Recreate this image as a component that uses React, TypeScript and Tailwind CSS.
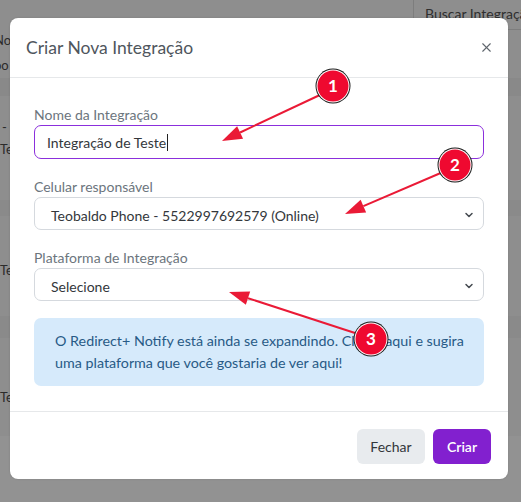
import { X, ChevronDown } from 'lucide-react'

const font = { fontFamily: 'Lato, "Noto Sans", sans-serif' }

function Marker({ x, y, n }: { x: number; y: number; n: number }) {
  return (
    <g>
      <circle cx={x} cy={y} r={17.5} fill="#1a1a1a" />
      <circle cx={x} cy={y} r={16.5} fill="#ffffff" />
      <circle cx={x} cy={y} r={15.5} fill="#ef0930" />
      <text
        x={x}
        y={y + 6}
        textAnchor="middle"
        fontSize={17}
        fontWeight={700}
        fill="#ffffff"
        fontFamily="Lato, Roboto, sans-serif"
      >
        {n}
      </text>
    </g>
  )
}

function Arrow({ x1, y1, x2, y2 }: { x1: number; y1: number; x2: number; y2: number }) {
  const a = Math.atan2(y2 - y1, x2 - x1)
  const len = 20
  const w = 7
  const bx = x2 - Math.cos(a) * len
  const by = y2 - Math.sin(a) * len
  const p1 = `${bx + Math.sin(a) * w},${by - Math.cos(a) * w}`
  const p2 = `${bx - Math.sin(a) * w},${by + Math.cos(a) * w}`
  return (
    <g>
      <line x1={x1} y1={y1} x2={bx} y2={by} stroke="#ea1a36" strokeWidth={2} />
      <polygon points={`${x2},${y2} ${p1} ${p2}`} fill="#ea1a36" />
    </g>
  )
}

function Field({ label, children }: { label: string; children: React.ReactNode }) {
  return (
    <div className="flex flex-col">
      <label className="text-[14px] leading-[18px] text-[#6c757d] mb-[1px]">{label}</label>
      {children}
    </div>
  )
}

function Select({ value }: { value: string }) {
  return (
    <div className="relative flex items-center h-[33px] rounded-[7px] border border-[#d5d9de] bg-white pl-[16px] pt-[3px] text-[14px] text-[#33373b]">
      <span>{value}</span>
      <ChevronDown className="absolute right-[8px] top-[11px] w-[12px] h-[12px] text-[#454a50]" strokeWidth={3} />
    </div>
  )
}

export default function App() {
  return (
    <div className="relative w-[521px] h-[502px] overflow-hidden bg-[#8e8e8e]" style={font}>
      {/* page behind the backdrop */}
      <div className="flex flex-col text-[14px] text-[#2b2b2b]">
        <div className="flex h-[30px]">
          <div className="flex-1" />
          <div className="w-[108px] border-l border-b border-[#7d7d7d] pl-[11px] pt-[3px] whitespace-nowrap text-[#2f2f2f]">
            Buscar Integração
          </div>
        </div>
        <div className="h-[48px] leading-[20px] text-[13px]">
          <div className="-ml-[6px]">No</div>
          <div className="-ml-[6px] mt-[5px]">oo</div>
        </div>
        <div className="h-[18px] bg-[#898989]" />
        <div className="h-[104px] pt-[20px] leading-[22px] text-[13px]">
          <div className="pl-[2px]">-</div>
          <div>Te</div>
        </div>
        <div className="h-[16px] bg-[#8a8a8a]" />
        <div className="h-[100px] pt-[45px] text-[13px]">Te</div>
        <div className="h-[22px] bg-[#8a8a8a]" />
        <div className="h-[98px] pt-[50px] text-[13px]">Te</div>
        <div className="h-[66px] bg-[#929292]" />
      </div>

      {/* modal */}
      <div className="absolute left-[10px] top-[18px] w-[498px] h-[461px] rounded-[8px] bg-white flex flex-col shadow-[0_0_2px_rgba(0,0,0,0.15)]">
        <div className="flex items-center justify-between h-[60px] px-[16px] border-b border-[#e6e8ea]">
          <h2 className="text-[17.5px] text-[#4f565d] pt-[2px]">Criar Nova Integração</h2>
          <X className="w-[15px] h-[15px] text-[#5f666d] -mr-[2px]" strokeWidth={1.8} />
        </div>

        <div className="flex flex-col px-[24px] pt-[28px] pb-[25px] gap-[19px] border-b border-[#e6e8ea]">
          <Field label="Nome da Integração">
            <div className="flex items-center h-[34px] rounded-[7px] border border-[#8b2fdc] pl-[12px] text-[14px] text-[#33373b]">
              Integração de Teste<span className="inline-block w-[1px] h-[17px] bg-[#222] ml-[1px]" />
            </div>
          </Field>
          <Field label="Celular responsável">
            <Select value="Teobaldo Phone - 5522997692579 (Online)" />
          </Field>
          <Field label="Plataforma de Integração">
            <Select value="Selecione" />
          </Field>
          <div className="rounded-[7px] bg-[#d6eafb] pl-[21px] pr-[10px] py-[12px] text-[14.3px] leading-[22px] text-[#285a86] mt-[-2px]">
            O Redirect+ Notify está ainda se expandindo. Clique aqui e sugira uma plataforma que você gostaria de ver aqui!
          </div>
        </div>

        <div className="flex justify-end items-center gap-[8px] px-[17px] pt-[17px]">
          <button className="h-[35px] w-[68px] rounded-[6px] bg-[#e8ebee] text-[14px] text-[#33373b]">Fechar</button>
          <button className="h-[35px] w-[58px] rounded-[6px] bg-[#8220cf] text-[14px] font-semibold text-white">Criar</button>
        </div>
      </div>

      {/* annotations */}
      <svg className="absolute inset-0 pointer-events-none" width={521} height={502}>
        <Arrow x1={322} y1={94} x2={222} y2={141} />
        <Arrow x1={443} y1={172} x2={345} y2={214} />
        <Arrow x1={355} y1={333} x2={229} y2={292} />
        <Marker x={333} y={86} n={1} />
        <Marker x={455} y={165} n={2} />
        <Marker x={371} y={339} n={3} />
      </svg>
    </div>
  )
}
